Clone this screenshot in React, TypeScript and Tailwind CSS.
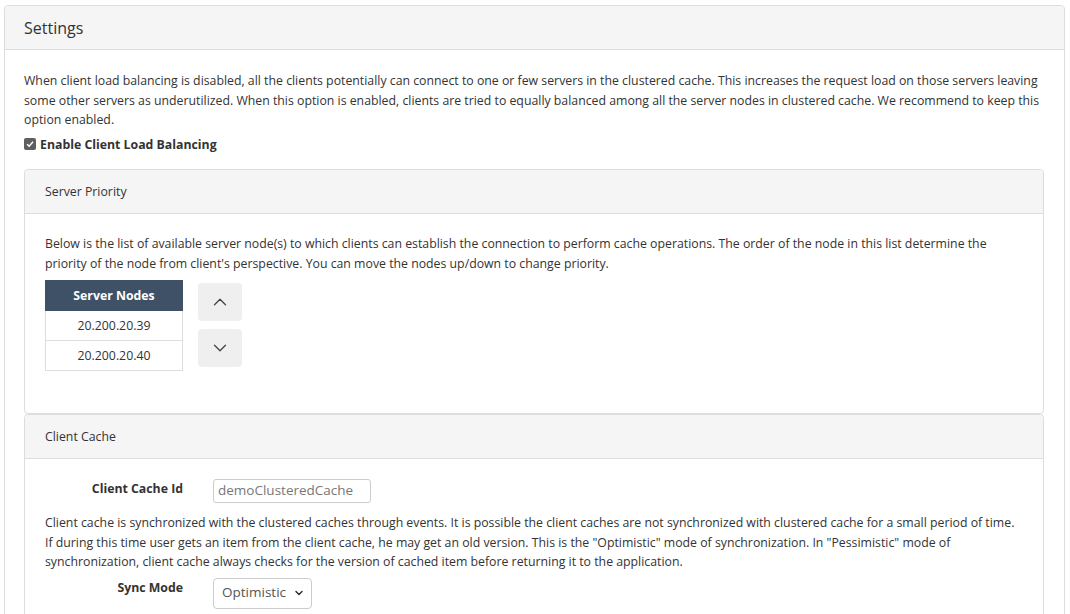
import { ChevronUp, ChevronDown } from "lucide-react";

const font = { fontFamily: '"Open Sans", "Noto Sans", sans-serif' };

const intro = [
  "When client load balancing is disabled, all the clients potentially can connect to one or few servers in the clustered cache. This increases the request load on those servers leaving",
  "some other servers as underutilized. When this option is enabled, clients are tried to equally balanced among all the server nodes in clustered cache. We recommend to keep this",
  "option enabled.",
];

const priorityText = [
  "Below is the list of available server node(s) to which clients can establish the connection to perform cache operations. The order of the node in this list determine the",
  "priority of the node from client's perspective. You can move the nodes up/down to change priority.",
];

const cacheText = [
  "Client cache is synchronized with the clustered caches through events. It is possible the client caches are not synchronized with clustered cache for a small period of time.",
  'If during this time user gets an item from the client cache, he may get an old version. This is the "Optimistic" mode of synchronization. In "Pessimistic" mode of',
  "synchronization, client cache always checks for the version of cached item before returning it to the application.",
];

const nodes = ["20.200.20.39", "20.200.20.40"];

const Lines = ({ lines }: { lines: string[] }) => (
  <>
    {lines.map((l, i) => (
      <span key={i} className="block whitespace-nowrap">
        {l}
      </span>
    ))}
  </>
);

const SubPanel = ({ title, children }: { title: string; children: React.ReactNode }) => (
  <div className="border border-[#dddddd] rounded-[4px]">
    <div className="h-[44px] flex items-center pl-[20px] bg-[#f5f5f5] border-b border-[#dddddd] rounded-t-[4px]">
      {title}
    </div>
    {children}
  </div>
);

export default function App() {
  return (
    <div className="min-h-screen bg-white pl-[4px] pr-[5px] pt-[5px] text-[#333333]" style={font}>
      <div className="border border-[#dddddd] rounded-[4px] h-[700px]">
        <div className="h-[44px] flex items-center pl-[19px] bg-[#f5f5f5] border-b border-[#dddddd] rounded-t-[4px] text-[16px]">
          Settings
        </div>
        <div className="pt-[21px] pl-[19px] pr-[20px] text-[12.3px] leading-[19.5px]">
          <Lines lines={intro} />
          <label className="mt-[5px] flex items-center gap-[4px] font-bold">
            <span className="w-[12px] h-[12px] rounded-[2px] bg-[#5f5f5f] flex items-center justify-center">
              <svg viewBox="0 0 12 12" className="w-[10px] h-[10px]">
                <path d="M2.5 6.2 L5 8.6 L9.6 3.4" fill="none" stroke="white" strokeWidth="1.8" />
              </svg>
            </span>
            Enable Client Load Balancing
          </label>

          <div className="mt-[15px]">
            <SubPanel title="Server Priority">
              <div className="pt-[20px] pl-[20px] pb-[42px] leading-[20px]">
                <Lines lines={priorityText} />
                <div className="mt-[6px] flex items-start gap-[15px]">
                  <table className="w-[138px] border-collapse text-center">
                    <thead>
                      <tr>
                        <th className="h-[30px] bg-[#3e5166] text-white font-bold border border-[#3e5166]">Server Nodes</th>
                      </tr>
                    </thead>
                    <tbody>
                      {nodes.map((n) => (
                        <tr key={n}>
                          <td className="h-[30px] border border-[#dddddd]">{n}</td>
                        </tr>
                      ))}
                    </tbody>
                  </table>
                  <div className="mt-[3px] flex flex-col gap-[8px]">
                    <button className="w-[44px] h-[38px] rounded-[4px] bg-[#efefef] flex items-center justify-center text-[#444]">
                      <ChevronUp size={22} strokeWidth={1.4} />
                    </button>
                    <button className="w-[44px] h-[38px] rounded-[4px] bg-[#efefef] flex items-center justify-center text-[#444]">
                      <ChevronDown size={22} strokeWidth={1.4} />
                    </button>
                  </div>
                </div>
              </div>
            </SubPanel>

            <SubPanel title="Client Cache">
              <div className="pt-[20px] pl-[20px] pb-[20px]">
                <div className="flex items-start gap-[30px]">
                  <div className="w-[138px] text-right font-bold">Client Cache Id</div>
                  <div className="w-[158px] h-[24px] border border-[#cccccc] rounded-[3px] px-[4px] flex items-center text-[13.5px] text-[#777777]">
                    demoClusteredCache
                  </div>
                </div>
                <div className="mt-[10px]">
                  <Lines lines={cacheText} />
                </div>
                <div className="mt-[6px] flex items-start gap-[30px]">
                  <div className="w-[138px] text-right font-bold">Sync Mode</div>
                  <div className="w-[99px] h-[31px] border border-[#cccccc] rounded-[4px] pl-[8px] pr-[6px] flex items-center justify-between text-[13.5px] text-[#555555]">
                    Optimistic
                    <ChevronDown size={12} strokeWidth={3} className="text-[#333]" />
                  </div>
                </div>
              </div>
            </SubPanel>
          </div>
        </div>
      </div>
    </div>
  );
}
